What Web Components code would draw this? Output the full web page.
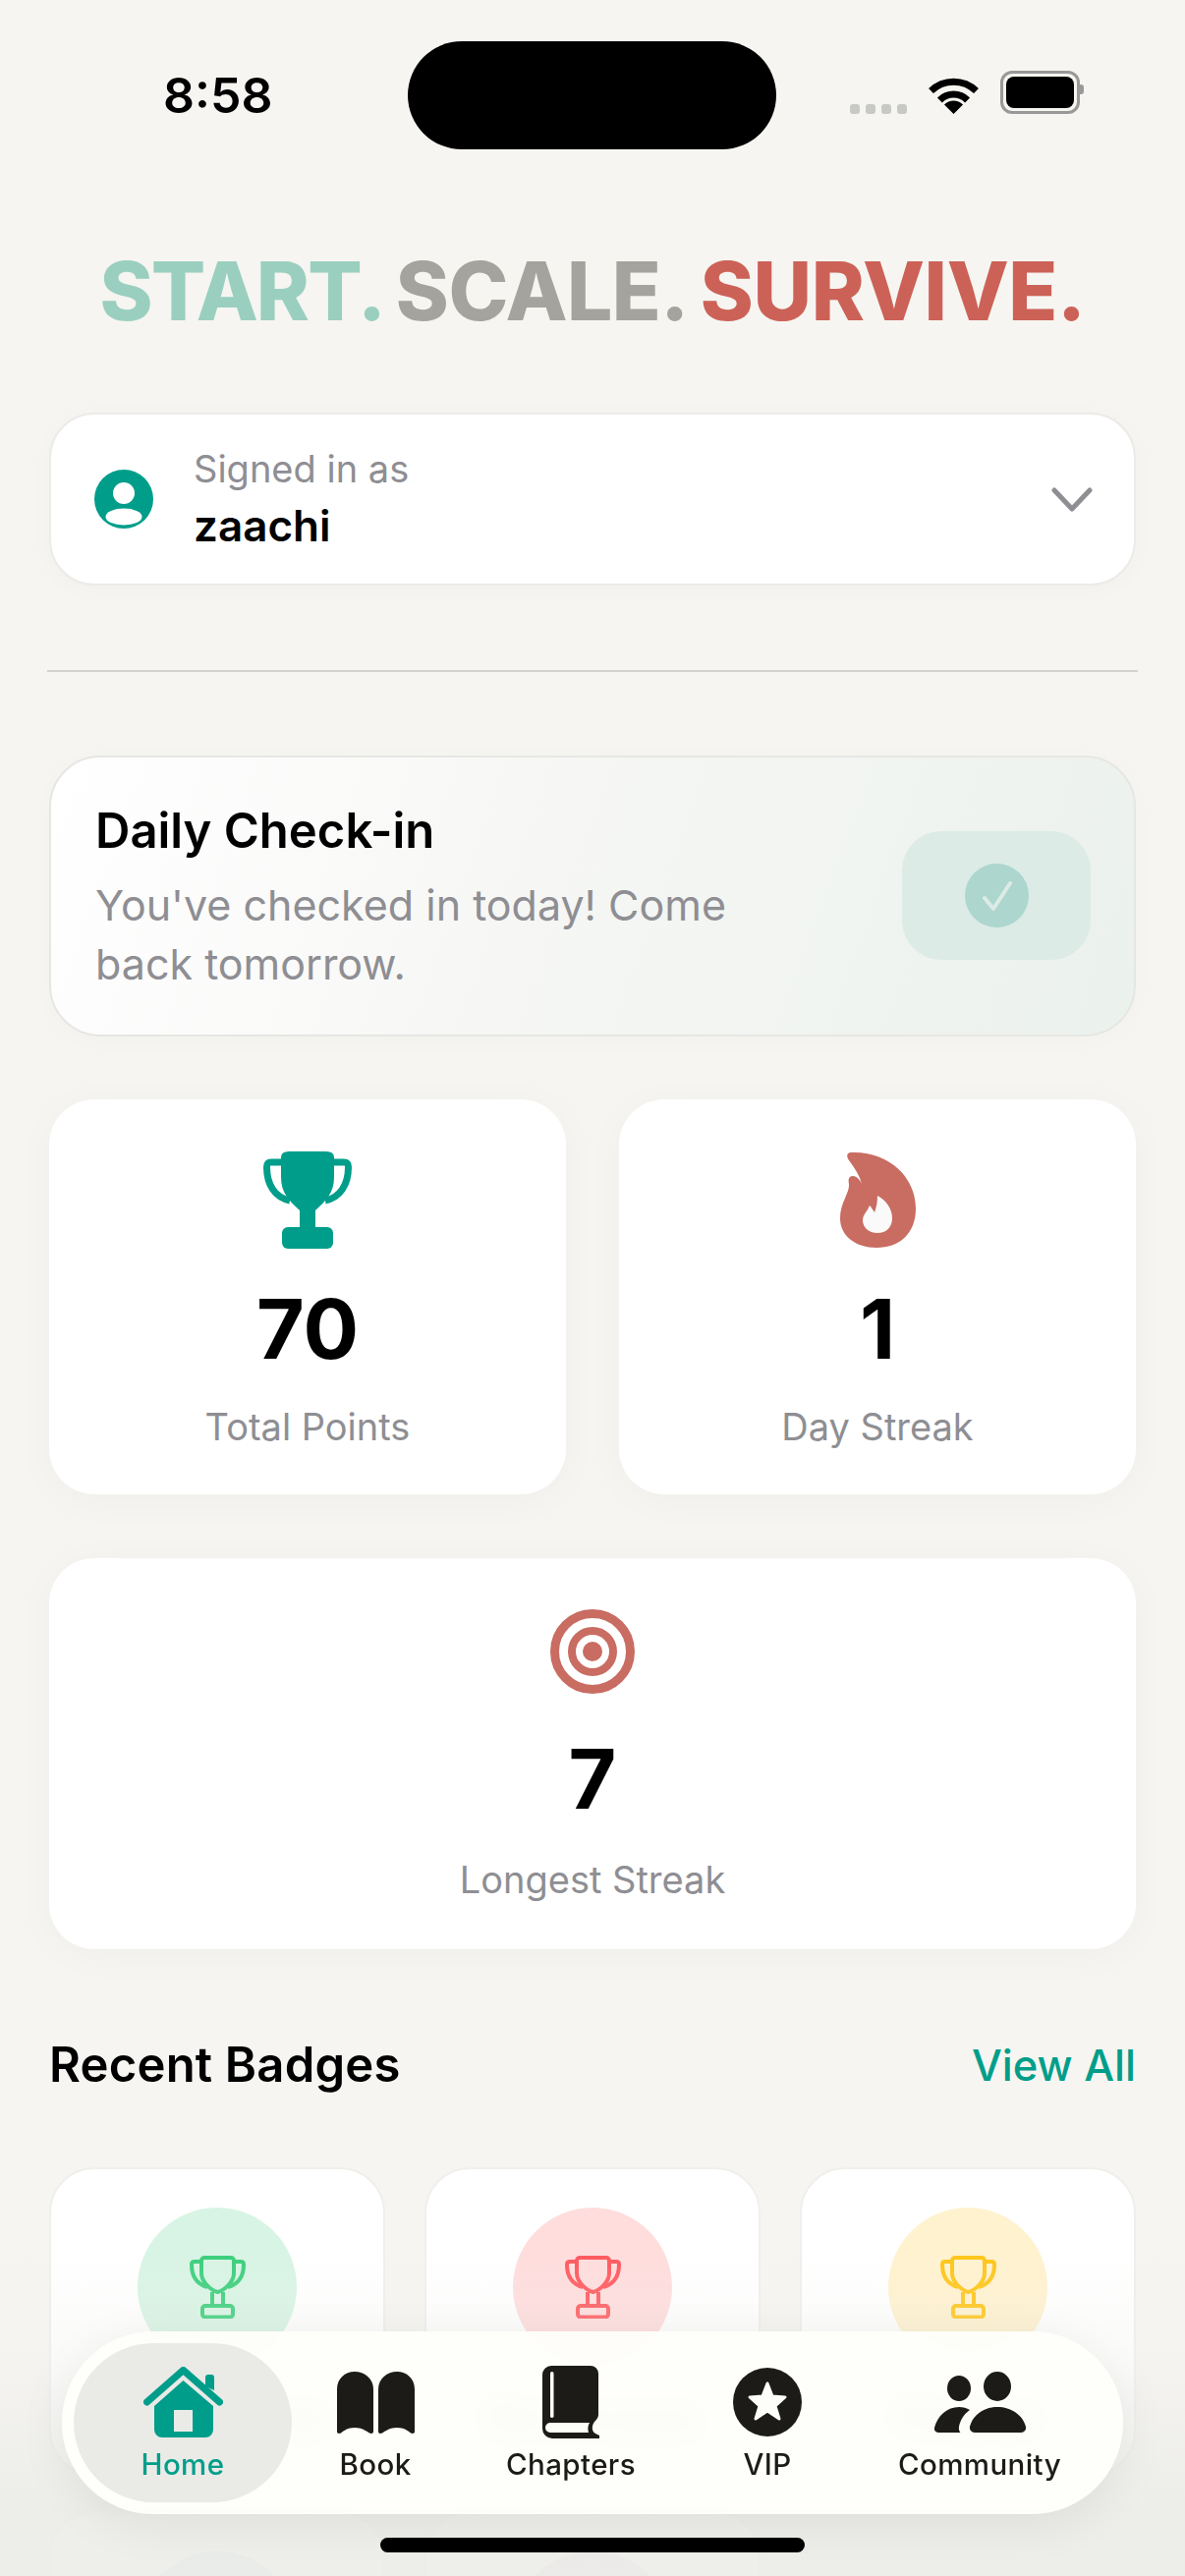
<!DOCTYPE html>
<html lang="en">
<head>
<meta charset="utf-8">
<title>Home</title>
<style>
  html, body { margin: 0; padding: 0; background: #f6f5f1; }
  body { font-family: Inter, "Noto Sans", sans-serif; }
</style>
</head>
<body>
<app-screen>
  <status-bar></status-bar>
  <brand-title></brand-title>
  <account-card name="zaachi"></account-card>
  <hr-line></hr-line>
  <checkin-card></checkin-card>
  <stat-grid>
    <stat-card icon="trophy" value="70" label="Total Points"></stat-card>
    <stat-card icon="flame" value="1" label="Day Streak"></stat-card>
    <stat-card class="wide" icon="target" value="7" label="Longest Streak"></stat-card>
  </stat-grid>
  <section-head title="Recent Badges" action="View All"></section-head>
  <badge-grid>
    <badge-card color="#3ccf7c" tint="#d8f4e4" label="Point Master"></badge-card>
    <badge-card color="#ff5a5f" tint="#ffdddd" label="No Excuses"></badge-card>
    <badge-card color="#ffc61a" tint="#fff2cf" label="Finisher"></badge-card>
    <badge-card color="#5aa0c8" tint="#dcebf3"></badge-card>
    <badge-card color="#a070c0" tint="#eadff2"></badge-card>
  </badge-grid>
  <tab-bar slot="overlay"></tab-bar>
</app-screen>

<script>
const ICONS = {
  trophy: `<svg width="90" height="99" viewBox="0 0 90 99" fill="#009e8a">
    <path d="M18 6Q18 0 26 0H64Q72 0 72 6V26C72 42 64 50 53 60V78H37V60C26 50 18 42 18 26Z"/>
    <path d="M19 11H8Q3.5 11 3.5 16C3.5 34 12 47 27 50M71 11H82Q86.5 11 86.5 16C86.5 34 78 47 63 50" fill="none" stroke="#009e8a" stroke-width="7"/>
    <rect x="19" y="77" width="52" height="22" rx="6"/>
  </svg>`,
  flame: `<svg width="77" height="98" viewBox="0 0 77 98">
    <path fill="#c96c62" d="M11 1C7 1 6 5 9 9C15 17 20 25 22 33C20 29 17 25 13 25C9 25 8 28 9 33C10 42 0 52 0 68C0 86 16 98 37 98C60 98 77 84 77 58C77 28 52 1 14 1Z"/>
    <path fill="#fafafa" d="M38 45C47 50 53 58 53 68C53 77 47 83 38 83C29 83 23 77 23 70C23 64 28 61 30 55C32 57 33 59 35 62C37 57 38 51 38 45Z"/>
  </svg>`,
  target: `<svg width="86" height="86" viewBox="0 0 86 86" fill="none" stroke="#c96c62">
    <circle cx="43" cy="43" r="38.5" stroke-width="9"/>
    <circle cx="43" cy="43" r="21" stroke-width="8"/>
    <circle cx="43" cy="43" r="10" fill="#c96c62" stroke="none"/>
  </svg>`,
  home: `<svg width="81" height="72" viewBox="0 0 81 72" fill="#009e8a">
    <path d="M40.5 14L71 40V64A8 8 0 0 1 63 72H19A8 8 0 0 1 11 64V40ZM31 44V66H50V44Z" fill-rule="evenodd"/>
    <path d="M63 20V11A3 3 0 0 1 66 8H69A3 3 0 0 1 72 11V24Z"/>
    <path d="M3.5 36L40.5 3.5L77.5 36" fill="none" stroke="#009e8a" stroke-width="7" stroke-linecap="round" stroke-linejoin="round"/>
  </svg>`,
  book: `<svg width="79" height="63" viewBox="0 0 79 63" fill="#1c1b17">
    <path d="M0 18C0 7 8 0 18 0S37 7 37 18V61C37 63 35 63.500 33 62.500C29 60 25 57 18 57S7 60 4 62.500C2 63.500 0 63 0 61Z"/>
    <path transform="translate(79 0) scale(-1 1)" d="M0 18C0 7 8 0 18 0S37 7 37 18V61C37 63 35 63.500 33 62.500C29 60 25 57 18 57S7 60 4 62.500C2 63.500 0 63 0 61Z"/>
  </svg>`,
  chapters: `<svg width="58" height="74" viewBox="0 0 58 74">
    <path fill="#1c1b17" d="M9 0H49A8 8 0 0 1 57 8V50C57 52 55.500 55 53 57C50 61 50 67 54 69L58 71V74H10A10 10 0 0 1 0 64V9A9 9 0 0 1 9 0Z"/>
    <rect x="8" y="6" width="3.500" height="47" rx="1.700" fill="#fdfdfa"/>
    <path fill="#fdfdfa" d="M8 58H48C46 61 46 65 47 68H8A5 5 0 0 1 8 58Z"/>
  </svg>`,
  vip: `<svg width="70" height="70" viewBox="0 0 70 70">
    <circle cx="35" cy="35" r="35" fill="#1c1b17"/>
    <path fill="#fdfdfa" stroke="#fdfdfa" stroke-width="3" stroke-linejoin="round" d="M35 16L40 29L53 30L43 39L47 52L35 44L23 52L27 39L17 30L30 29Z"/>
  </svg>`,
  community: `<svg width="93" height="62" viewBox="0 0 93 62" fill="#1c1b17">
    <ellipse cx="64" cy="15" rx="14" ry="15"/>
    <ellipse cx="25" cy="17" rx="12" ry="13"/>
    <path d="M41 62A5 5 0 0 1 36 56C39 44 50 36 64 36S90 44 93 56A5 5 0 0 1 88 62Z"/>
    <path d="M4 62A4 4 0 0 1 0 57C3 45 13 36 25 36C29 36 33 37 36 39C30 43 26 50 25 56C24.500 59 25.500 61 26.500 62Z"/>
  </svg>`
};

class AppScreen extends HTMLElement {
  constructor() {
    super();
    this.attachShadow({ mode: 'open' });
  }

  connectedCallback() {
    this.shadowRoot.innerHTML = `
      <style>
        :host {
          display: block;
          position: relative;
          width: 1206px;
          height: 2622px;
          overflow: hidden;
          background: #f6f5f1;
          color: #000;
        }
        .content {
          display: flex;
          flex-direction: column;
          padding: 0 50px;
        }
        .fade {
          position: absolute;
          left: 0;
          right: 0;
          bottom: 0;
          height: 330px;
          pointer-events: none;
          background: linear-gradient(to bottom, rgba(240,239,236,0), rgba(238,238,234,.3) 35%, rgba(236,236,232,.88) 80%);
        }
        .home-bar {
          position: absolute;
          left: 387px;
          top: 2583px;
          width: 432px;
          height: 15px;
          border-radius: 8px;
          background: #000;
        }
      </style>
      <div class="content"><slot></slot></div>
      <div class="fade"></div>
      <slot name="overlay"></slot>
      <div class="home-bar"></div>
    `;
  }
}

class StatusBar extends HTMLElement {
  constructor() {
    super();
    this.attachShadow({ mode: 'open' });
  }

  connectedCallback() {
    this.shadowRoot.innerHTML = `
      <style>
        :host {
          display: grid;
          grid-template-columns: 365px 375px 1fr;
          align-items: center;
          height: 245px;
          margin: 0 -50px;
          padding: 42px 0 93px;
          box-sizing: border-box;
        }
        .time {
          padding-left: 166px;
          font-size: 50px;
          font-weight: 600;
          line-height: 110px;
        }
        .island {
          height: 110px;
          margin-left: 50px;
          width: 375px;
          border-radius: 55px;
          background: #000;
        }
        .right {
          display: flex;
          align-items: flex-end;
          padding-left: 125px;
          height: 38px;
        }
        .dots { display: flex; gap: 6px; }
        .dots i {
          width: 10px;
          height: 10px;
          border-radius: 3px;
          background: #c8c8c6;
        }
        svg { display: block; margin-left: 22px; }
        .battery {
          position: relative;
          width: 69px;
          height: 32px;
          margin-left: 22px;
          padding: 3px;
          border: 3px solid #999;
          border-radius: 12px;
        }
        .battery b {
          display: block;
          height: 100%;
          border-radius: 8px;
          background: #000;
        }
        .battery::after {
          content: '';
          position: absolute;
          right: -7px;
          top: 11px;
          width: 4px;
          height: 10px;
          border-radius: 0 3px 3px 0;
          background: #999;
        }
      </style>
      <div class="time">8:58</div>
      <div class="island"></div>
      <div class="right">
        <div class="dots"><i></i><i></i><i></i><i></i></div>
        <svg width="51" height="37" viewBox="0 0 51 37" fill="none" stroke="#000" stroke-width="7">
          <path d="M2.500 13.500A33 33 0 0 1 48.500 13.500"/>
          <path d="M11.400 22.900A20 20 0 0 1 39.600 22.900"/>
          <path d="M25.500 37L16 27.500A13.500 13.500 0 0 1 35 27.500Z" fill="#000" stroke="none"/>
        </svg>
        <div class="battery"><b></b></div>
      </div>
    `;
  }
}

class BrandTitle extends HTMLElement {
  constructor() {
    super();
    this.attachShadow({ mode: 'open' });
  }

  connectedCallback() {
    this.shadowRoot.innerHTML = `
      <style>
        :host {
          display: flex;
          justify-content: center;
          gap: 12px;
          height: 100px;
          margin: 2px 0 73px;
          font-size: 82px;
          font-weight: 800;
          line-height: 100px;
          white-space: nowrap;
        }
      </style>
      <span style="color:#9acfc0;letter-spacing:-2px">START.</span>
      <span style="color:#a5a39d;letter-spacing:-.5px">SCALE.</span>
      <span style="color:#cc6257;letter-spacing:-.4px">SURVIVE.</span>
    `;
  }
}

class AccountCard extends HTMLElement {
  constructor() {
    super();
    this.attachShadow({ mode: 'open' });
  }

  connectedCallback() {
    this.shadowRoot.innerHTML = `
      <style>
        :host {
          display: flex;
          align-items: center;
          box-sizing: border-box;
          height: 176px;
          padding: 0 42px 0 44px;
          background: #fff;
          border: 2px solid #ecebe8;
          border-radius: 46px;
          box-shadow: 0 4px 24px rgba(0,0,0,.025);
        }
        .info { flex: 1; margin-left: 41px; }
        .sub { font-size: 38px; line-height: 52px; color: #8e8e93; }
        .name { font-size: 44px; font-weight: 600; line-height: 60px; margin-top: 2px; }
        svg { display: block; }
        .chev { margin-top: 2px; }
      </style>
      <svg width="60" height="60" viewBox="0 0 60 60">
        <circle cx="30" cy="30" r="30" fill="#009e8a"/>
        <circle cx="30" cy="24" r="11" fill="#fff"/>
        <ellipse cx="30" cy="48" rx="18.500" ry="8.500" fill="#fff"/>
      </svg>
      <div class="info">
        <div class="sub">Signed in as</div>
        <div class="name">${this.getAttribute('name')}</div>
      </div>
      <svg class="chev" width="42" height="26" viewBox="0 0 42 26" fill="none" stroke="#8e8e93" stroke-width="5" stroke-linecap="round" stroke-linejoin="round">
        <path d="M3 3L21 22L39 3"/>
      </svg>
    `;
  }
}

class HrLine extends HTMLElement {
  constructor() {
    super();
    this.attachShadow({ mode: 'open' });
  }

  connectedCallback() {
    this.shadowRoot.innerHTML = `
      <style>
        :host {
          display: block;
          height: 1.500px;
          margin: 86px -2px 85px;
          background: #d2d1cd;
        }
      </style>
    `;
  }
}

class CheckinCard extends HTMLElement {
  constructor() {
    super();
    this.attachShadow({ mode: 'open' });
  }

  connectedCallback() {
    this.shadowRoot.innerHTML = `
      <style>
        :host {
          display: flex;
          align-items: center;
          justify-content: space-between;
          box-sizing: border-box;
          height: 286px;
          padding: 0 44px 0 45px;
          background: linear-gradient(110deg, #ffffff 0%, #f6f7f5 45%, #ebf1ed 100%);
          border: 2px solid #e6e7e3;
          border-radius: 52px;
          box-shadow: 0 4px 24px rgba(0,0,0,.02);
        }
        .title { font-size: 49px; font-weight: 600; line-height: 66px; }
        .sub {
          margin-top: 12px;
          width: 700px;
          font-size: 43px;
          line-height: 60px;
          color: #8e8e93;
        }
        .btn {
          display: flex;
          align-items: center;
          justify-content: center;
          width: 192px;
          height: 131px;
          border-radius: 40px;
          background: #dcebe5;
        }
        svg { display: block; }
      </style>
      <div>
        <div class="title">Daily Check-in</div>
        <div class="sub">You've checked in today! Come back tomorrow.</div>
      </div>
      <div class="btn">
        <svg width="65" height="65" viewBox="0 0 65 65">
          <circle cx="32.500" cy="32.500" r="32.500" fill="#acd6ce"/>
          <path d="M20 35L29 46L46 20" fill="none" stroke="#dcebe5" stroke-width="4" stroke-linecap="round" stroke-linejoin="round"/>
        </svg>
      </div>
    `;
  }
}

class StatGrid extends HTMLElement {
  constructor() {
    super();
    this.attachShadow({ mode: 'open' });
  }

  connectedCallback() {
    this.shadowRoot.innerHTML = `
      <style>
        :host {
          display: grid;
          grid-template-columns: 1fr 1fr;
          column-gap: 54px;
          row-gap: 65px;
          margin-top: 64px;
        }
        ::slotted(.wide) { grid-column: 1 / -1; }
      </style>
      <slot></slot>
    `;
  }
}

class StatCard extends HTMLElement {
  constructor() {
    super();
    this.attachShadow({ mode: 'open' });
  }

  connectedCallback() {
    const wide = this.classList.contains('wide');
    this.shadowRoot.innerHTML = `
      <style>
        :host {
          display: flex;
          flex-direction: column;
          align-items: center;
          box-sizing: border-box;
          height: ${wide ? 398 : 402}px;
          padding-top: ${wide ? 52 : 53}px;
          background: #fff;
          border-radius: 46px;
          box-shadow: 0 6px 40px rgba(0,0,0,.03);
        }
        .icon { height: ${wide ? 86 : 99}px; }
        svg { display: block; }
        .value {
          margin-top: ${wide ? 37 : 32}px;
          font-size: 84px;
          font-weight: 700;
          line-height: 100px;
        }
        .label {
          margin-top: ${wide ? 27 : 24}px;
          font-size: 38px;
          line-height: 50px;
          color: #8e8e93;
        }
      </style>
      <div class="icon">${ICONS[this.getAttribute('icon')]}</div>
      <div class="value">${this.getAttribute('value')}</div>
      <div class="label">${this.getAttribute('label')}</div>
    `;
  }
}

class SectionHead extends HTMLElement {
  constructor() {
    super();
    this.attachShadow({ mode: 'open' });
  }

  connectedCallback() {
    this.shadowRoot.innerHTML = `
      <style>
        :host {
          display: flex;
          align-items: center;
          justify-content: space-between;
          height: 60px;
          margin: 88px 0 74px;
        }
        .title { font-size: 49px; font-weight: 600; letter-spacing: .2px; }
        .action { font-size: 43.500px; font-weight: 500; color: #009e8a; }
      </style>
      <div class="title">${this.getAttribute('title')}</div>
      <div class="action">${this.getAttribute('action')}</div>
    `;
  }
}

class BadgeGrid extends HTMLElement {
  constructor() {
    super();
    this.attachShadow({ mode: 'open' });
  }

  connectedCallback() {
    this.shadowRoot.innerHTML = `
      <style>
        :host {
          display: grid;
          grid-template-columns: repeat(3, 342px);
          justify-content: space-between;
          row-gap: 36px;
        }
      </style>
      <slot></slot>
    `;
  }
}

class BadgeCard extends HTMLElement {
  constructor() {
    super();
    this.attachShadow({ mode: 'open' });
  }

  connectedCallback() {
    const color = this.getAttribute('color');
    const label = this.getAttribute('label');
    this.shadowRoot.innerHTML = `
      <style>
        :host {
          display: flex;
          flex-direction: column;
          align-items: center;
          box-sizing: border-box;
          height: 314px;
          padding-top: 39px;
          background: #fff;
          border: 2px solid #f0efec;
          border-radius: 46px;
        }
        .circle {
          display: flex;
          align-items: center;
          justify-content: center;
          flex: none;
          width: 162px;
          height: 162px;
          border-radius: 50%;
          background: ${this.getAttribute('tint')};
        }
        .label {
          margin-top: 28px;
          font-size: 38px;
          font-weight: 600;
          white-space: nowrap;
        }
        svg { display: block; }
      </style>
      <div class="circle">
        <svg width="57" height="64" viewBox="0 0 57 64" fill="none" stroke="${color}" stroke-width="4" stroke-linejoin="round">
          <path d="M12 5A3 3 0 0 1 15 2H42A3 3 0 0 1 45 5V18C45 26 36 35 28.500 37C21 35 12 26 12 18Z"/>
          <path d="M12 6H5Q2 6 2 9C2 21 8 29 18 32M45 6H52Q55 6 55 9C55 21 49 29 39 32"/>
          <path d="M23 37V51M34 37V51"/>
          <rect x="13" y="51" width="31" height="11.500" rx="3"/>
        </svg>
      </div>
      ${label ? `<div class="label">${label}</div>` : ''}
    `;
  }
}

class TabBar extends HTMLElement {
  constructor() {
    super();
    this.attachShadow({ mode: 'open' });
  }

  connectedCallback() {
    const tabs = [
      ['home', 'Home', 222, true],
      ['book', 'Book', 170],
      ['chapters', 'Chapters', 228],
      ['vip', 'VIP', 172],
      ['community', 'Community', 260]
    ];
    this.shadowRoot.innerHTML = `
      <style>
        :host {
          position: absolute;
          left: 63px;
          top: 2373px;
          width: 1080px;
          height: 186px;
          box-sizing: border-box;
          padding: 12px;
          display: flex;
          border-radius: 93px;
          background: rgba(254,254,251,.95);
          -webkit-backdrop-filter: blur(14px);
          backdrop-filter: blur(14px);
          box-shadow: 0 10px 50px rgba(0,0,0,.07);
        }
        .tab {
          display: flex;
          flex-direction: column;
          align-items: center;
          box-sizing: border-box;
          height: 162px;
          color: #1c1b17;
          font-size: 29.500px;
          font-weight: 500;
          letter-spacing: .4px;
        }
        .tab.on {
          color: #009e8a;
          background: #eaeae7;
          border-radius: 81px;
        }
        .icon {
          display: flex;
          align-items: center;
          justify-content: center;
          height: 74px;
          margin-top: 23px;
        }
        .name { margin-top: 6px; line-height: 40px; }
        svg { display: block; }
      </style>
      ${tabs.map(([icon, name, w, on]) => `
        <div class="tab${on ? ' on' : ''}" style="width:${w}px">
          <div class="icon">${ICONS[icon]}</div>
          <div class="name">${name}</div>
        </div>`).join('')}
    `;
  }
}

customElements.define('app-screen', AppScreen);
customElements.define('status-bar', StatusBar);
customElements.define('brand-title', BrandTitle);
customElements.define('account-card', AccountCard);
customElements.define('hr-line', HrLine);
customElements.define('checkin-card', CheckinCard);
customElements.define('stat-grid', StatGrid);
customElements.define('stat-card', StatCard);
customElements.define('section-head', SectionHead);
customElements.define('badge-grid', BadgeGrid);
customElements.define('badge-card', BadgeCard);
customElements.define('tab-bar', TabBar);
</script>
</body>
</html>
